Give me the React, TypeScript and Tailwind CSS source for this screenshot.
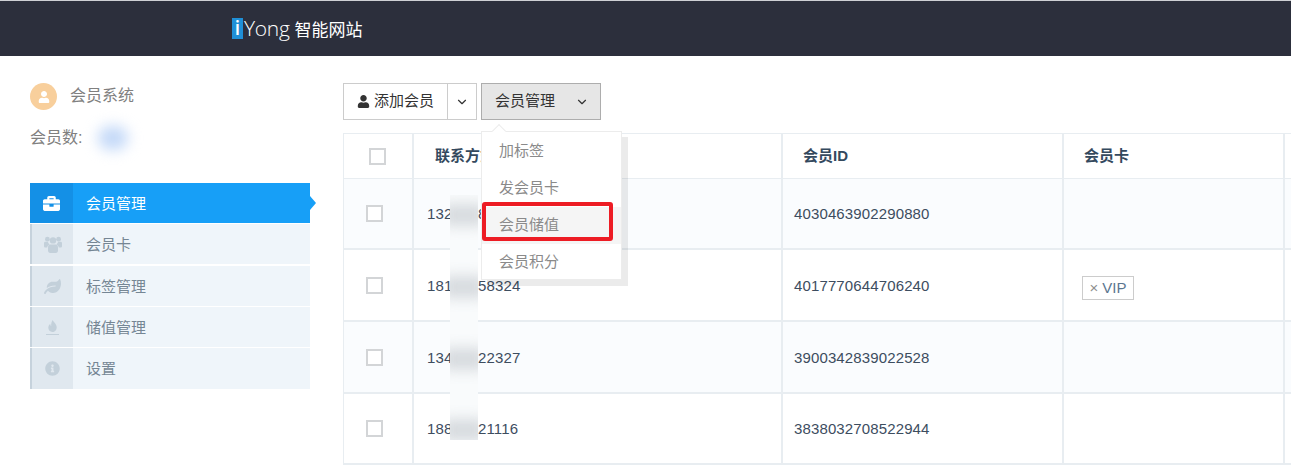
import { ChevronDown } from "lucide-react";
import { FaBriefcase, FaInfoCircle, FaLeaf, FaUser } from "react-icons/fa";

const font = "font-['Liberation_Sans','Noto_Sans_CJK_SC',sans-serif]";

function GroupIcon() {
  return (
    <svg width="18" height="17" viewBox="0 0 18 17" fill="currentColor">
      <circle cx="3.4" cy="3.2" r="2.4" />
      <circle cx="14.6" cy="3.2" r="2.4" />
      <circle cx="9" cy="4.4" r="3.2" />
      <path d="M0 7.2c0-1 .8-1.4 1.6-1.4h2.2c.3 1.2 1 2.1 1.8 2.7C4.3 9 3.4 10 3.2 11.6H1.4C.6 11.6 0 11 0 10.2z" />
      <path d="M18 7.2c0-1-.8-1.4-1.6-1.4h-2.2c-.3 1.2-1 2.1-1.8 2.7 1.3.5 2.2 1.5 2.4 3.1h1.8c.8 0 1.4-.6 1.4-1.4z" />
      <path d="M6.4 8.6h5.2c1.5 0 2.4 1.1 2.4 2.8v3.2c0 1.3-.9 2.4-2.2 2.4H6.2C4.9 17 4 15.9 4 14.6v-3.2c0-1.7.9-2.8 2.4-2.8z" />
    </svg>
  );
}

function FlameIcon() {
  return (
    <div className="flex flex-col items-center">
      <svg width="9" height="12" viewBox="0 0 9 12" fill="currentColor">
        <path d="M4.8 0c.4 2.2 3.9 3.7 3.9 7.2C8.700 9.900 6.800 12 4.400 12 2 12 .3 10.100.3 7.600.3 5.800 1.300 4.600 2.300 3.700c-.1 1.200.3 2 .9 2.300C3 3.900 3.500 1.600 4.800 0z" />
      </svg>
      <div className="mt-[2px] h-px w-[13px] bg-[#c3d0da]" />
    </div>
  );
}

const menu = [
  { label: "会员卡", icon: <GroupIcon />, cls: "h-[40px] mb-[2px]" },
  { label: "标签管理", icon: <FaLeaf className="text-[17px]" />, cls: "h-[40px] mb-px" },
  { label: "储值管理", icon: <FlameIcon />, cls: "h-[40px] mb-px" },
  { label: "设置", icon: <FaInfoCircle className="text-[15px]" />, cls: "h-[41px]" },
];

const rows = [
  { phone: "132", tail: "8", id: "4030463902290880", h: "h-[71px]", alt: true },
  { phone: "181", tail: "58324", id: "4017770644706240", h: "h-[72px]", vip: true },
  { phone: "134", tail: "22327", id: "3900342839022528", h: "h-[72px]", alt: true },
  { phone: "188", tail: "21116", id: "3838032708522944", h: "h-[71px]" },
];

function Box({ className }: { className: string }) {
  return <div className={`h-[17px] w-[17px] border-2 border-[#d3d5d7] bg-white ${className}`} />;
}

function Sidebar() {
  return (
    <aside className="ml-[30px] w-[280px] shrink-0 pt-[27px]">
      <div className="flex items-center">
        <div className="flex h-[27px] w-[27px] items-center justify-center rounded-full bg-[#f8cf9c] text-white">
          <FaUser className="text-[12px]" />
        </div>
        <span className="mb-[2px] ml-[13px] text-[16px] leading-none text-[#808080]">会员系统</span>
      </div>
      <div className="mt-[18px] flex h-5 items-center text-[16px] text-[#808080]">
        <span>会员数:</span>
        <div className="ml-[16px] h-6 w-[30px] rounded-full bg-[#c4d9f8] blur-[7px]" />
      </div>
      <nav className="mt-[35px]">
        <div className="relative mb-px flex h-10 items-center bg-[#179ff7] text-white">
          <div className="flex h-full w-[43px] items-center justify-center bg-[#1490e6]">
            <FaBriefcase className="text-[17px]" />
          </div>
          <span className="ml-[13px] pt-[2px] text-[15px]">会员管理</span>
          <div className="absolute left-full top-[13px] h-0 w-0 border-y-[7px] border-l-[6px] border-y-transparent border-l-[#179ff7]" />
        </div>
        {menu.map((m) => (
          <div key={m.label} className={`flex items-center bg-[#eff5fa] text-[15px] text-[#758694] ${m.cls}`}>
            <div className="flex h-full w-[43px] items-center justify-center border-l-2 border-[#c6d2dc] bg-[#e0e8ef] text-[#c3d0da]">
              {m.icon}
            </div>
            <span className="ml-[13px] pt-[2px]">{m.label}</span>
          </div>
        ))}
      </nav>
    </aside>
  );
}

function Toolbar() {
  return (
    <div className="flex h-[37px] text-[15px] text-[#333333]">
      <div className="flex items-center border border-[#cccccc] bg-white pl-[13px] pr-[13px]">
        <FaUser className="mr-[4px] text-[13px] text-[#333333]" />
        添加会员
      </div>
      <div className="ml-[-1px] flex w-[30px] items-center justify-center border border-[#cccccc] bg-white">
        <ChevronDown size={14} strokeWidth={2} />
      </div>
      <div className="ml-1 flex w-[120px] items-center border border-[#adadad] bg-[#e6e6e6] pl-[13px]">
        会员管理
        <ChevronDown size={14} strokeWidth={2} className="ml-5" />
      </div>
    </div>
  );
}

function Table() {
  const col = "grid grid-cols-[70px_369px_281px_221px_1fr]";
  const cell = "flex items-center border-r-2 border-[#e8edf1]";
  return (
    <div className="mt-[13px] border-l border-t border-[#e8edf1] text-[15px] text-[#3d4d5f]">
      <div className={`${col} h-[45px] border-b border-[#e8edf1] font-bold text-[#34495e]`}>
        <div className={`${cell} pl-[25px]`}>
          <Box className="" />
        </div>
        <div className={`${cell} pl-[21px]`}>联系方式</div>
        <div className={`${cell} pl-5`}>会员ID</div>
        <div className={`${cell} pl-5`}>会员卡</div>
        <div />
      </div>
      {rows.map((r) => (
        <div
          key={r.id}
          className={`${col} ${r.h} border-b-2 border-[#e8edf1] ${r.alt ? "bg-[#fafcfe]" : "bg-white"}`}
        >
          <div className={`${cell} pl-[22px]`}>
            <Box className="" />
          </div>
          <div className={`${cell} pl-[13px] pt-[2px] tracking-[0.13px]`}>
            <span className="w-[51px]">{r.phone}</span>
            <span>{r.tail}</span>
          </div>
          <div className={`${cell} pl-[11px] pt-[2px] tracking-[0.13px]`}>{r.id}</div>
          <div className={`${cell} pl-[18px]`}>
            {r.vip && (
              <div className="mt-[6px] flex h-6 w-[52px] items-center justify-center border border-[#cccccc] text-[#5b7690]">
                <span className="mr-1 text-[#8f8f8f]">×</span>VIP
              </div>
            )}
          </div>
          <div />
        </div>
      ))}
    </div>
  );
}

// blurred-out phone digits, darkest on each text line
function Redaction() {
  const blobs = ["top-[9px]", "top-[81px]", "top-[153px]", "top-[224px]"];
  return (
    <div className="absolute left-[107px] top-[139px] h-[245px] w-[28px] overflow-hidden bg-[#f9fbfc]">
      {blobs.map((b) => (
        <div key={b} className={`absolute -left-2 h-[22px] w-[44px] bg-[#d6dade] blur-[7px] ${b}`} />
      ))}
    </div>
  );
}

function Dropdown() {
  const items = ["加标签", "发会员卡", "会员储值", "会员积分"];
  return (
    <div className="absolute left-[138px] top-[75px] h-[149px] w-[141px] border border-[#ececec] bg-white pt-px text-[15px] text-[#8a8a8a] shadow-[6px_6px_0_rgba(0,0,0,0.08)]">
      <div className="absolute left-[12px] top-[-6px] h-[10px] w-[10px] rotate-45 border-l border-t border-[#ececec] bg-white" />
      {items.map((it, i) => (
        <div key={it} className={`flex h-[37px] items-center pl-[17px] ${i === 2 ? "bg-[#f5f5f5]" : ""}`}>
          {it}
        </div>
      ))}
      <div className="absolute left-0 top-[70px] h-[39px] w-[131px] rounded-[3px] border-4 border-[#ed1c24]" />
    </div>
  );
}

export default function App() {
  return (
    <div className={`h-[465px] w-[1291px] overflow-hidden bg-white ${font}`}>
      <header className="h-14 border-t border-[#cfd0d4] bg-[#2c2f3c]">
        <div className="flex h-full items-center pl-[232px] text-white">
          <div className="flex h-[21px] w-[11px] items-center justify-center bg-[#1f8fd6] font-['Open_Sans',sans-serif] text-[19px] font-semibold leading-none">
            i
          </div>
          <span className="ml-px font-['Open_Sans',sans-serif] text-[21px] font-light tracking-[-0.3px]">Yong</span>
          <span className="ml-[5px] font-['Noto_Sans_CJK_SC',sans-serif] text-[17px]">智能网站</span>
        </div>
      </header>
      <div className="flex">
        <Sidebar />
        <main className="relative ml-[33px] flex-1 pt-[27px]">
          <Toolbar />
          <Table />
          <Redaction />
          <Dropdown />
        </main>
      </div>
    </div>
  );
}
